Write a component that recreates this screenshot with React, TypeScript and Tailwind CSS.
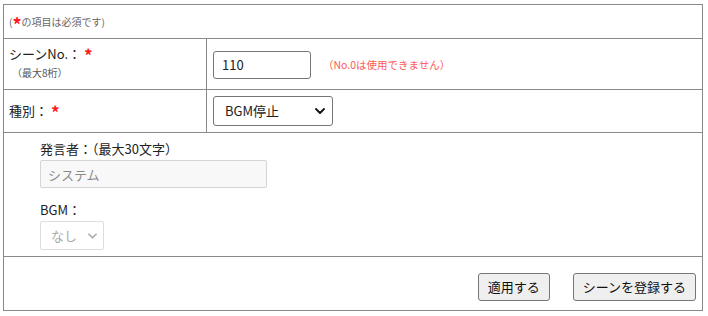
import React from 'react';

const font = { fontFamily: '"Noto Sans CJK JP", "Noto Sans", sans-serif' };

const Chevron: React.FC<{ className?: string }> = ({ className }) => (
    <svg viewBox="0 0 10 6" className={className} fill="none" stroke="currentColor" strokeWidth="1.8" strokeLinecap="round" strokeLinejoin="round">
        <path d="M1 1l4 4 4-4" />
    </svg>
);

const Req: React.FC = () => <span className="text-[#ff1a1a] text-[17px] font-bold leading-none ml-[3px] mt-[1px]">*</span>;

export default function App() {
    return (
        <div className="w-[708px] h-[316px] bg-white pt-[4px] pl-[3px] text-[#222]" style={font}>
            <div className="w-[700px] border border-[#8a8a8a] flex flex-col">
                <div className="h-[34px] border-b border-[#8a8a8a] flex items-center px-[5px] text-[10px] text-[#666]">
                    <span>(</span>
                    <span className="text-[#ff1a1a] text-[18px] font-bold leading-none mt-[5px]">*</span>
                    <span>の項目は必須です)</span>
                </div>

                <div className="h-[51px] border-b border-[#8a8a8a] flex">
                    <div className="w-[203px] border-r border-[#8a8a8a] pl-[5px] pt-[6px]">
                        <div className="text-[13px] leading-[18px] flex items-start">シーンNo.：<Req /></div>
                        <div className="text-[10px] text-[#555] pl-[3px] mt-[2px]">（最大8桁）</div>
                    </div>
                    <div className="flex-1 flex items-center pl-[6px] pt-[1px]">
                        <input
                            defaultValue="110"
                            className="w-[98px] h-[28px] border border-[#767676] rounded-[3px] px-[8px] text-[13px] text-[#222] outline-none"
                            style={font}
                        />
                        <span className="ml-[12px] mt-[1px] text-[10.5px] text-[#ff5a5a]">（No.0は使用できません）</span>
                    </div>
                </div>

                <div className="h-[43px] border-b border-[#8a8a8a] flex">
                    <div className="w-[203px] border-r border-[#8a8a8a] pl-[5px] flex items-center text-[13px]">
                        種別：<Req />
                    </div>
                    <div className="flex-1 flex items-center pl-[6px]">
                        <div className="relative w-[120px] h-[30px]">
                            <select
                                defaultValue="stop"
                                className="appearance-none w-full h-full border border-[#767676] rounded-[3px] bg-white pl-[11px] text-[13px] text-[#222] outline-none"
                                style={font}
                            >
                                <option value="stop">BGM停止</option>
                            </select>
                            <Chevron className="absolute right-[8px] top-[12px] w-[10px] h-[6px] text-[#111] pointer-events-none" />
                        </div>
                    </div>
                </div>

                <div className="h-[124px] border-b border-[#8a8a8a] pl-[36px] pt-[7px] flex flex-col">
                    <div className="text-[13px] leading-[18px]">発言者：（最大30文字）</div>
                    <input
                        disabled
                        defaultValue="システム"
                        className="mt-[2px] w-[227px] h-[28px] border border-[#d4d4d4] rounded-[2px] bg-[#f8f8f8] px-[7px] text-[13px] text-[#888]"
                        style={font}
                    />
                    <div className="mt-[13px] text-[13px] leading-[18px]">BGM：</div>
                    <div className="relative mt-[2px] w-[64px] h-[29px]">
                        <select
                            disabled
                            defaultValue="none"
                            className="appearance-none w-full h-full border border-[#dedede] rounded-[2px] bg-white pl-[10px] text-[13px] text-[#aaa]"
                            style={font}
                        >
                            <option value="none">なし</option>
                        </select>
                        <Chevron className="absolute right-[7px] top-[12px] w-[9px] h-[6px] text-[#aaa] pointer-events-none" />
                    </div>
                </div>

                <div className="h-[53px] flex items-center justify-end gap-[23px] pr-[6px] pt-[7px]">
                    <button className="h-[28px] px-[9px] border border-[#767676] rounded-[3px] bg-[#efefef] text-[13px] text-[#111]" style={font}>
                        適用する
                    </button>
                    <button className="h-[28px] px-[9px] border border-[#767676] rounded-[3px] bg-[#efefef] text-[13px] text-[#111]" style={font}>
                        シーンを登録する
                    </button>
                </div>
            </div>
        </div>
    );
}
